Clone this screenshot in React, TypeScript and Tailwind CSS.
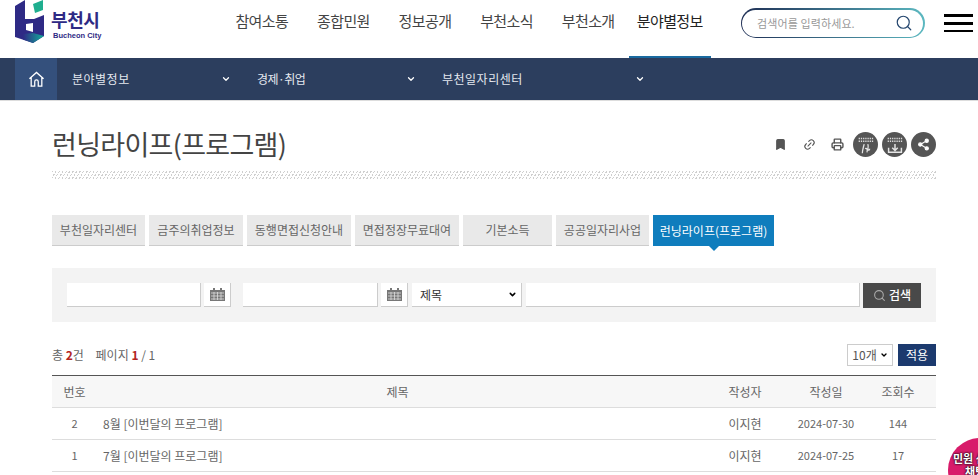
import { Search, ChevronDown, Bookmark, Link2, Printer, Share2 } from "lucide-react";

const gnb = ["참여소통", "종합민원", "정보공개", "부천소식", "부천소개", "분야별정보"];

const subNav = [
  { label: "분야별정보", width: "w-[185px]", tracking: "tracking-[0.5px]" },
  { label: "경제·취업", width: "w-[185px]", tracking: "tracking-[-0.5px]" },
  { label: "부천일자리센터", width: "w-[229px]", tracking: "tracking-[0.5px]" },
];

const tabs = [
  { label: "부천일자리센터", width: "w-[93px]" },
  { label: "금주의취업정보", width: "w-[94px]" },
  { label: "동행면접신청안내", width: "w-[104px]" },
  { label: "면접정장무료대여", width: "w-[104px]" },
  { label: "기본소득", width: "w-[89px]" },
  { label: "공공일자리사업", width: "w-[93px]" },
];

const rows = [
  { no: 2, title: "8월 [이번달의 프로그램]", writer: "이지현", date: "2024-07-30", hits: 144 },
  { no: 1, title: "7월 [이번달의 프로그램]", writer: "이지현", date: "2024-07-25", hits: 17 },
];

function Logo() {
  return (
    <svg width="30" height="44" viewBox="0 0 30 44" className="shrink-0">
      <defs>
        <linearGradient id="logoTeal" x1="0" y1="0" x2="1" y2="0">
          <stop offset="0" stopColor="#2e2a85" />
          <stop offset="1" stopColor="#12b09a" />
        </linearGradient>
      </defs>
      <path d="M0 6 L10 0 V19 L19 19 L29 15 V36 L18 43 L0 37 Z" fill="#2e2a85" />
      <path d="M8 34 L18 33 L29 36 L18 43 L8 39.5 Z" fill="url(#logoTeal)" />
      <path d="M11 24 L18 23 V32 L11 30 Z" fill="#fff" />
      <path d="M10 15 L17 17 L10 19 Z" fill="#fff" />
      <path d="M18 4 L28 0 V10 L20 13 Z" fill="#1fae8f" />
    </svg>
  );
}

function CalendarIcon() {
  return (
    <svg width="15" height="13" viewBox="0 0 15 13">
      <path d="M3 0h2v2h5V0h2v2h3v11H0V2h3z" fill="#777" />
      <path d="M1 5h13M1 8h13M1 11h13M4 4v8M7.5 4v8M11 4v8" stroke="#ddd" strokeWidth="0.8" />
    </svg>
  );
}

function Dots() {
  return <path d="M4 5h16M4 8h16" stroke="#ddd" strokeWidth="1.6" strokeDasharray="1.4 1" />;
}

function SignIcon() {
  return (
    <svg width="22" height="24" viewBox="0 0 24 24" fill="none">
      <Dots />
      <path d="M10 11c-1 4-2 7-2 10M14 11c1 3 0 5 0 6s2 1 2-1M11 16c2-1 3 1 2 4" stroke="#e5e5e5" strokeWidth="1.4" />
    </svg>
  );
}

function DownloadIcon() {
  return (
    <svg width="22" height="24" viewBox="0 0 24 24" fill="none">
      <Dots />
      <path d="M12 11v7M9 15l3 3 3-3M5 15v5h14v-5" stroke="#e5e5e5" strokeWidth="1.6" />
    </svg>
  );
}

export default function App() {
  return (
    <div className="relative h-[475px] w-[978px] overflow-hidden bg-white font-['Noto_Sans_CJK_KR','Noto_Sans',sans-serif] text-[#666]">
      {/* Header */}
      <header className="flex h-[58px] items-start">
        <div className="ml-[15px] flex w-[220px] gap-[6px]">
          <Logo />
          <div className="pt-[10px] leading-none">
            <p className="text-[18px] font-bold tracking-[-0.4px] text-[#2e2a85]">부천시</p>
            <p className="ml-[2px] mt-[4px] font-['Liberation_Sans',sans-serif] text-[7.5px] font-bold text-[#2e2a85]">Bucheon City</p>
          </div>
        </div>
        <nav className="-ml-[14px] flex">
          {gnb.map((item, i) => (
            <a
              key={item}
              className={`relative flex h-[58px] w-[81.6px] items-start justify-center pt-[10px] text-[15px] tracking-[-0.6px] ${i === 5 ? "text-[#222]" : "text-[#444]"}`}
            >
              {item}
              {i === 5 && <span className="absolute bottom-0 left-0 h-[2px] w-full bg-[#1a6aa0]" />}
            </a>
          ))}
        </nav>
        <div className="ml-[30px] mt-[8px] h-[30px] w-[184px] rounded-full bg-gradient-to-r from-[#1f2f55] to-[#5bb8c0] p-[1.5px]">
          <div className="flex h-full items-center justify-between rounded-full bg-white pl-[15px] pr-[10px]">
            <span className="text-[11px] tracking-[0.1px] text-[#999]">검색어를 입력하세요.</span>
            <Search className="h-[18px] w-[18px] text-[#24466e]" strokeWidth={1.6} />
          </div>
        </div>
        <div className="ml-[19px] mt-[14px] flex w-[29px] flex-col gap-[5px]">
          <span className="h-[3px] bg-black" />
          <span className="h-[3px] bg-black" />
          <span className="h-[2px] bg-black" />
        </div>
      </header>

      {/* Sub navigation */}
      <div className="flex h-[43px] items-stretch border-b border-[#ddd] bg-[#2c3e5e] pl-[15px] text-white">
        <div className="flex w-[42px] items-center justify-center bg-[#34507c]">
          <svg width="17" height="17" viewBox="0 0 24 24" fill="none" stroke="#fff" strokeWidth="1.8">
            <path d="M2 11 12 2l10 9M4.5 9v12.5h5V15a2.5 2.5 0 0 1 5 0v6.5h5V9" />
          </svg>
        </div>
        {subNav.map((item) => (
          <div key={item.label} className={`flex items-center justify-between pl-[15px] pr-[11px] ${item.width}`}>
            <span className={`text-[12px] text-[#e4e8ef] ${item.tracking}`}>{item.label}</span>
            <ChevronDown className="h-[10px] w-[10px]" strokeWidth={3} />
          </div>
        ))}
      </div>

      <main className="ml-[52px] w-[884px]">
        {/* Title */}
        <div className="flex h-[69px] items-end justify-between pb-[7px]">
          <h1 className="text-[27px] font-normal leading-[38px] tracking-[-0.7px] text-[#444]">런닝라이프(프로그램)</h1>
          <div className="flex items-center gap-[4px] pb-[6px] text-[#555]">
            <Bookmark className="mr-[12px] h-[13px] w-[13px] fill-[#555]" />
            <Link2 className="mr-[11px] h-[13px] w-[13px] -rotate-45" />
            <Printer className="mr-[5px] h-[13px] w-[13px]" strokeWidth={2.6} />
            <span className="flex h-[25px] w-[25px] items-center justify-center rounded-full bg-[#555]">
              <SignIcon />
            </span>
            <span className="flex h-[25px] w-[25px] items-center justify-center rounded-full bg-[#555]">
              <DownloadIcon />
            </span>
            <span className="flex h-[25px] w-[25px] items-center justify-center rounded-full bg-[#555]">
              <Share2 className="h-[13px] w-[13px] fill-white text-white" />
            </span>
          </div>
        </div>
        <div className="mt-[1px] h-[9px] bg-[repeating-linear-gradient(0deg,#fff_0,#fff_1px,transparent_1px,transparent_3px),repeating-linear-gradient(120deg,#cfcfcf_0,#cfcfcf_1px,#fff_1px,#fff_3px)]" />

        {/* Tabs */}
        <ul className="mt-[35px] flex gap-[4px]">
          {tabs.map((tab) => (
            <li key={tab.label} className={`flex h-[31px] items-center justify-center whitespace-nowrap border-b border-[#ccc] bg-[#e9e9e9] text-[12px] text-[#666] ${tab.width}`}>
              {tab.label}
            </li>
          ))}
          <li className="relative flex h-[31px] w-[121px] items-center justify-center whitespace-nowrap bg-[#0f7dbd] text-[12px] text-white">
            런닝라이프(프로그램)
            <span className="absolute left-1/2 top-full h-0 w-0 -translate-x-1/2 border-x-[5px] border-t-[5px] border-x-transparent border-t-[#0f7dbd]" />
          </li>
        </ul>

        {/* Search */}
        <div className="mt-[22px] flex h-[54px] items-center bg-[#f3f3f3] pl-[15px]">
          <input className="h-[24px] w-[134px] border-b border-r border-[#ccc] bg-white" />
          <button className="ml-[3px] flex h-[24px] w-[27px] items-center justify-center border-b border-r border-[#ccc] bg-white">
            <CalendarIcon />
          </button>
          <input className="ml-[12px] h-[24px] w-[135px] border-b border-r border-[#ccc] bg-white" />
          <button className="ml-[3px] flex h-[24px] w-[27px] items-center justify-center border-b border-r border-[#ccc] bg-white">
            <CalendarIcon />
          </button>
          <div className="ml-[4px] flex h-[24px] w-[110px] items-center justify-between border-b border-r border-[#ccc] bg-white pl-[8px] pr-[4px]">
            <span className="text-[12px] text-[#333]">제목</span>
            <ChevronDown className="h-[9px] w-[9px] text-black" strokeWidth={4} />
          </div>
          <input className="ml-[4px] h-[24px] w-[334px] border-b border-r border-[#ccc] bg-white" />
          <button className="ml-[3px] flex h-[25px] w-[58px] items-center justify-center gap-[3px] bg-[#494949] text-[12px] font-medium text-white">
            <Search className="h-[13px] w-[13px] text-[#aaa]" />
            검색
          </button>
        </div>

        {/* Info row */}
        <div className="mt-[22px] flex h-[22px] items-center justify-between">
          <p className="text-[12px] text-[#666]">
            총 <b className="text-[#b3261e]">2</b>건 <span className="ml-[9px]">페이지</span> <b className="text-[#b3261e]">1</b> / 1
          </p>
          <div className="flex items-center gap-[5px]">
            <div className="flex h-[22px] w-[46px] items-center justify-center gap-[3px] border border-[#ccc] text-[12px] text-[#555]">
              10개
              <ChevronDown className="h-[8px] w-[8px] text-black" strokeWidth={4} />
            </div>
            <button className="h-[22px] w-[38px] bg-[#1c3a6e] text-[12px] text-white">적용</button>
          </div>
        </div>

        {/* Table */}
        <table className="mt-[9px] w-full table-fixed border-t border-[#555] text-[12px]">
          <colgroup>
            <col className="w-[45px]" />
            <col />
            <col className="w-[94px]" />
            <col className="w-[68px]" />
            <col className="w-[76px]" />
          </colgroup>
          <thead>
            <tr className="h-[32px] border-b border-[#ddd] bg-[#f7f7f7]">
              <th className="font-normal">번호</th>
              <th className="font-normal">제목</th>
              <th className="font-normal">작성자</th>
              <th className="font-normal">작성일</th>
              <th className="font-normal">조회수</th>
            </tr>
          </thead>
          <tbody>
            {rows.map((row) => (
              <tr key={row.no} className="h-[32px] border-b border-[#ddd] text-center">
                <td className="text-[11px]">{row.no}</td>
                <td className="pl-[6px] text-left">{row.title}</td>
                <td>{row.writer}</td>
                <td className="text-[11px]">{row.date}</td>
                <td className="text-[11px]">{row.hits}</td>
              </tr>
            ))}
          </tbody>
        </table>
      </main>

      {/* Floating button */}
      <div className="absolute left-[948px] top-[438px] h-[64px] w-[64px] rounded-full bg-[#d81b6a] pl-[5px] pt-[14px] text-[11px] font-bold leading-[13px] text-white [text-shadow:0_0_2px_#111,0_0_2px_#111]">
        민원 신청
        <br />
        <span className="ml-[12px]">채팅</span>
      </div>
    </div>
  );
}
